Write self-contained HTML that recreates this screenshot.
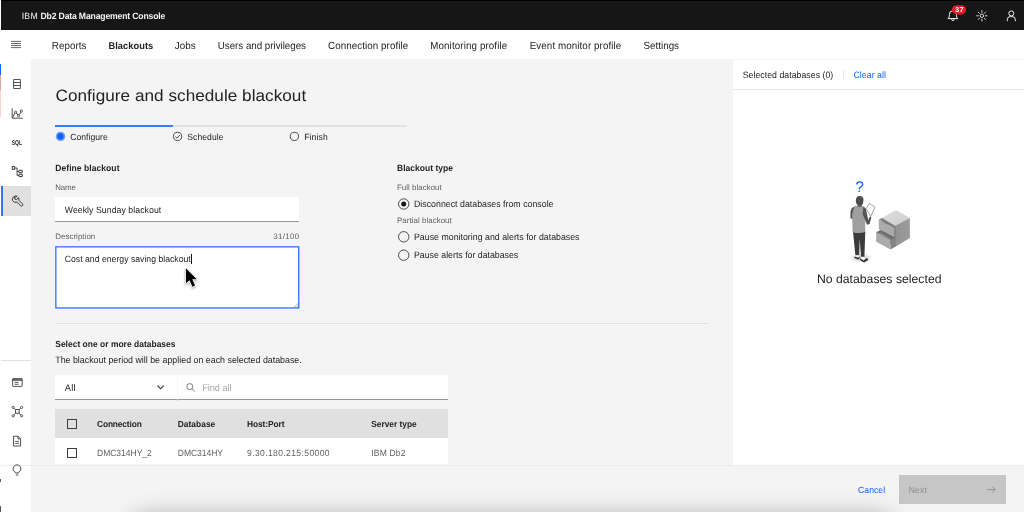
<!DOCTYPE html>
<html lang="en"><head><meta charset="utf-8"><title>IBM Db2 Data Management Console</title>
<style>
html,body{margin:0;padding:0}
body{width:1024px;height:512px;overflow:hidden;background:#f4f4f4;position:relative;font-family:"Liberation Sans",sans-serif}
.a{position:absolute;box-sizing:border-box}
.t{position:absolute;white-space:nowrap;text-rendering:geometricPrecision;line-height:16px;height:16px;margin:0;padding:0;display:block}
#txt{position:absolute;left:0;top:0;width:1024px;height:512px;will-change:transform}
</style></head><body>
<!-- header -->
<div class="a" style="left:1px;top:0;width:1023px;height:30px;background:#161616"></div>
<div class="a" style="left:1px;top:0;width:1023px;height:1px;background:#000"></div>

<!-- top nav -->
<div class="a" style="left:31px;top:30px;width:993px;height:29px;background:#fff"></div>

<!-- sidebar -->
<div class="a" style="left:0;top:30px;width:31px;height:482px;background:#fff"></div>
<div class="a" style="left:1px;top:186px;width:29.5px;height:29.5px;background:#e0e0e0"></div>
<div class="a" style="left:1px;top:186px;width:1.700px;height:29.500px;background:#2f74ff"></div>
<div class="a" style="left:1px;top:360px;width:30px;height:1px;background:#e0e0e0"></div>
<div class="a" style="left:1px;top:464.500px;width:30px;height:1px;background:#efefef"></div>

<!-- left edge strip -->
<div class="a" style="left:0;top:0;width:1px;height:30px;background:#fff"></div>
<div class="a" style="left:0;top:64px;width:1.300px;height:11px;background:#0f62fe"></div>
<div class="a" style="left:0;top:75px;width:1.300px;height:15px;background:#d9a8a2"></div>
<div class="a" style="left:0;top:90px;width:1.300px;height:27px;background:#f6d5d3"></div>

<div class="a" style="left:0;top:479px;width:1px;height:3px;background:#55557a"></div>
<div class="a" style="left:0;top:506px;width:1px;height:6px;background:#555"></div>

<!-- sidebar icons -->
<svg class="a" style="left:0;top:30px" width="31" height="482" viewBox="0 30 31 482" fill="none" stroke="#333" stroke-width="0.85">
  <!-- hamburger -->
  <g stroke="#525252" stroke-width="0.9"><path d="M11 41.4h10M11 43.5h10M11 45.5h10M11 47.6h10"/></g>
  <!-- table/db -->
  <rect x="13.600" y="79.500" width="6.800" height="9" rx="0.200"/><path d="M13.600 82.500h6.800M13.600 85.500h6.800"/>
  <!-- chart -->
  <path d="M12.2 108.2v10h10.6" />
  <path d="M12.6 117.6l2.2-4.4M16.4 112.8l1.6 2.6M19.4 114.6l1.6-2.6" stroke-width="0.9"/>
  <circle cx="15.6" cy="112.2" r="1.1" stroke-width="0.8"/><circle cx="18.6" cy="115.6" r="1.1" stroke-width="0.8"/><circle cx="21.4" cy="111" r="1.1" stroke-width="0.8"/>
  <!-- tree -->
  <rect x="12.200" y="166.600" width="2.500" height="2.700" stroke-width="0.900"/>
  <path d="M14.700 168h2.400v7.400h1.800M17.100 171.500h1.800" stroke-width="0.900"/>
  <rect x="18.900" y="170.300" width="3.400" height="2.400" rx="0.300" stroke-width="1"/>
  <rect x="18.900" y="174.200" width="3.400" height="2.400" rx="0.300" stroke-width="1"/>
  <!-- wrench -->
  <path d="M17.2 196.3a3.4 3.4 0 0 0-4.6 4.2 3.4 3.4 0 0 0 4.3 1.6l3.6 3.6a1.3 1.3 0 0 0 1.9-1.9l-3.6-3.6a3.4 3.4 0 0 0-.3-2.6l-2 2-1.6-.4-.4-1.600z" stroke-width="1" stroke-linejoin="round"/>
  <!-- window -->
  <rect x="12.6" y="378.6" width="9.6" height="7.8" rx="0.5"/><path d="M12.6 380h9.600" stroke-width="1.4"/><path d="M14.6 382.400h4M14.600 384.300h4" stroke-width="0.8"/>
  <!-- network -->
  <rect x="15.6" y="409.600" width="3.6" height="3.600" stroke-width="0.9"/>
  <circle cx="13.2" cy="407.400" r="1.100" stroke-width="0.8"/><circle cx="21.600" cy="407.400" r="1.100" stroke-width="0.8"/><circle cx="13.200" cy="415.800" r="1.100" stroke-width="0.8"/><circle cx="21.600" cy="415.800" r="1.100" stroke-width="0.8"/>
  <path d="M14 408.200l1.600 1.400M20.800 408.200l-1.600 1.400M14 415l1.600-1.800M20.800 415l-1.600-1.800" stroke-width="0.8"/>
  <!-- document -->
  <path d="M13.600 436.200h4.400l2.600 2.600v7.200h-7zM18 436.200v2.600h2.600" stroke-linejoin="round"/><path d="M15.200 441.400h3.800M15.200 443.400h3.800" stroke-width="0.8"/>
  <!-- bulb -->
  <path d="M15.600 472.400a3.900 3.900 0 1 1 2.800 0v.6h-2.800z" stroke-linejoin="round"/><path d="M15.800 475h2.600" stroke-width="0.9"/>
</svg>
<svg class="a" style="left:10px;top:136px;will-change:transform" width="14" height="14" viewBox="0 0 14 14"><text x="1.700" y="8.900" font-family="Liberation Sans, sans-serif" font-size="7" font-weight="700" fill="#2a2a2a" textLength="10.400" lengthAdjust="spacingAndGlyphs" text-rendering="geometricPrecision">SQL</text></svg>

<!-- header icons -->
<svg class="a" style="left:940px;top:0" width="84" height="30" viewBox="940 0 84 30" fill="none" stroke="#f4f4f4" stroke-width="1">
  <!-- bell -->
  <path d="M948 18.600c1.100-1 1.400-2 1.400-4.300a3.500 3.500 0 0 1 7 0c0 2.300.3 3.300 1.400 4.300z" stroke-linejoin="round"/><path d="M951.600 19.200a1.300 1.300 0 0 0 2.600 0"/>
  <!-- badge -->
  <rect x="952" y="5.200" width="14.200" height="9.200" rx="4.600" fill="#da1e28" stroke="none"/>
  <!-- sun -->
  <circle cx="981.900" cy="15.800" r="1.700" stroke-width="0.9"/>
  <path d="M981.900 10.300v2.400M981.900 18.900v2.400M976.400 15.800h2.400M985 15.800h2.400M978 11.900l1.700 1.700M984.100 18l1.700 1.700M978 19.700l1.700-1.700M984.100 13.600l1.700-1.700" stroke-width="0.9"/>
  <!-- user -->
  <circle cx="1011.300" cy="13.400" r="2.500"/><path d="M1007.300 21.200v-1.600a3 3 0 0 1 3-3h2a3 3 0 0 1 3 3v1.600"/>
</svg>

<!-- progress -->
<div class="a" style="left:55px;top:125.300px;width:351.600px;height:1.600px;background:#e2e2e2"></div>
<div class="a" style="left:55px;top:125px;width:118px;height:2px;background:#3a7bff"></div>
<svg class="a" style="left:54px;top:130px" width="250" height="14" viewBox="54 130 250 14" fill="none">
  <circle cx="60.500" cy="136.400" r="4.700" fill="#6a9cff" />
  <circle cx="60.500" cy="136.400" r="3.100" fill="#0f62fe"/>
  <circle cx="177.600" cy="136.400" r="4.100" stroke="#393939" stroke-width="0.9"/>
  <path d="M175.300 136.600l1.600 1.500 3-3" stroke="#393939" stroke-width="0.9"/>
  <circle cx="294.400" cy="136.400" r="4.100" stroke="#393939" stroke-width="0.9"/>
</svg>

<!-- name input -->
<div class="a" style="left:55px;top:197px;width:244px;height:24.500px;background:#fff;border-bottom:1px solid #969696"></div>
<!-- textarea -->
<svg class="a" style="left:54px;top:245px" width="247" height="65" viewBox="54 245 247 65"><rect x="55.850" y="246.850" width="242.900" height="61.100" fill="#fff" stroke="#2d72ff" stroke-width="1.300"/></svg>
<svg class="a" style="left:292.600px;top:301.800px" width="6" height="6" viewBox="0 0 6 6" stroke="#777" stroke-width="0.650"><path d="M1 5.500L5.500 1M3.500 5.500L5.500 3.500"/></svg>
<div class="a" style="left:191px;top:253.500px;width:1px;height:10.500px;background:#161616"></div>

<!-- radios -->
<svg class="a" style="left:396px;top:196px" width="16" height="68" viewBox="396 196 16 68" fill="none" stroke="#262626" stroke-width="0.800">
  <circle cx="403.700" cy="204" r="5.200"/><circle cx="403.700" cy="204" r="2.500" fill="#161616" stroke="none"/>
  <circle cx="403.700" cy="236.800" r="5.200"/>
  <circle cx="403.700" cy="255.200" r="5.200"/>
</svg>

<!-- divider -->
<div class="a" style="left:55px;top:323px;width:653px;height:1px;background:#e0e0e0"></div>

<!-- filter -->
<div class="a" style="left:55px;top:375px;width:392.500px;height:24.500px;background:#fff;border-bottom:1px solid #969696"></div>
<div class="a" style="left:177px;top:375px;width:1px;height:24px;background:#f6f6f6"></div>
<div class="a" style="left:177px;top:399px;width:1px;height:1.500px;background:#c9c9c9"></div>
<svg class="a" style="left:155px;top:380px" width="45" height="16" viewBox="155 380 45 16" fill="none" stroke="#393939" stroke-width="1">
  <path d="M157.500 385.700l3.100 3.100 3.100-3.100" stroke="#2a2a2a" stroke-width="1.100"/>
  <circle cx="189.800" cy="386.600" r="3" stroke="#666" stroke-width="0.850"/><path d="M192 388.800l2.800 2.800" stroke="#666" stroke-width="0.850"/>
</svg>

<!-- table -->
<div class="a" style="left:55px;top:409.200px;width:392.500px;height:29.300px;background:#e0e0e0"></div>
<div class="a" style="left:55px;top:438px;width:392.500px;height:26px;background:#fff"></div>
<div class="a" style="left:67px;top:419px;width:10px;height:10px;border:1px solid #3d3d3d"></div>
<div class="a" style="left:67px;top:448px;width:10px;height:10px;border:1px solid #3d3d3d"></div>

<!-- right panel -->
<div class="a" style="left:733px;top:59px;width:291px;height:405.500px;background:#fff"></div>
<div class="a" style="left:733px;top:89px;width:291px;height:1px;background:#e8e8e8"></div>
<div class="a" style="left:733px;top:59px;width:291px;height:1px;background:#f3f3f3"></div>
<div class="a" style="left:843px;top:70px;width:1px;height:9px;background:#e6e6e6"></div>

<!-- footer -->
<div class="a" style="left:31px;top:464.500px;width:993px;height:1px;background:#ebebeb"></div>
<div class="a" style="left:899px;top:475.300px;width:107.400px;height:28.700px;background:#c6c6c6"></div>
<svg class="a" style="left:984px;top:484px" width="14" height="12" viewBox="984 484 14 12" fill="none" stroke="#8d8d8d" stroke-width="0.900"><path d="M986.800 489.600h8.400M992 486.400l3.200 3.200-3.200 3.200"/></svg>

<!-- bottom shadow -->
<div class="a" style="left:136px;top:517px;width:752px;height:30px;box-shadow:0 0 24px 0 rgba(0,0,0,0.340)"></div>

<!-- mouse cursor -->
<svg class="a" style="left:182px;top:265px;overflow:visible" width="20" height="26" viewBox="182 265 20 26">
  <path d="M185.900 268.300v14.900l3.600-3 2.900 6.500 2.700-1.200-2.800-6.200h4.500z" fill="#000" stroke="#fff" stroke-width="1.800" stroke-linejoin="round" paint-order="stroke" style="filter:drop-shadow(0.500px 1px 1px rgba(0,0,0,0.350))"/>
</svg>

<!-- empty state illustration -->
<svg class="a" style="left:840px;top:174px;will-change:transform" width="80" height="94" viewBox="840 174 80 94">
  <defs>
    <radialGradient id="gsh" cx="50%" cy="50%" r="50%"><stop offset="0" stop-color="#000" stop-opacity="0.300"/><stop offset="0.550" stop-color="#000" stop-opacity="0.120"/><stop offset="1" stop-color="#000" stop-opacity="0"/></radialGradient>
    <linearGradient id="gtop" x1="0" y1="0" x2="1" y2="1"><stop offset="0" stop-color="#dedede"/><stop offset="1" stop-color="#cdcdcd"/></linearGradient>
    <linearGradient id="gright" x1="0" y1="0" x2="1" y2="0"><stop offset="0" stop-color="#929292"/><stop offset="1" stop-color="#9c9c9c"/></linearGradient>
  </defs>
  <!-- ground shadow -->
  <ellipse cx="861" cy="258" rx="11.500" ry="5" fill="url(#gsh)"/>
  <!-- legs -->
  <path d="M853 231.600l2.400 23.800h3.800l.5-16.600 1.300 18.200h3.400l.9-25.400z" fill="#3b3b3b"/>
  <!-- shoes -->
  <path d="M855.200 255.200h4l.2 1.400-1.200 1.800-3.400-1.200z" fill="#f2f2f2"/>
  <path d="M854.600 256.600l3.600 1.200 1.400-1.200.2 1.400-1.600 1.400-3.800-1.400z" fill="#2b2b2b"/>
  <path d="M861.200 256.800h3.400l.4 1.600-2 1.800-2.200-1.400z" fill="#f2f2f2"/>
  <path d="M860.600 258.600l3.200 2.200 4-1.800.4 1-4.200 2.400-4-2.400z" fill="#2b2b2b"/>
  <path d="M863.800 260.600l3.200-2.600 1.200 1.200-4 2.200z" fill="#2b2b2b"/>
  <!-- back arm -->
  <path d="M854.800 206.400c-2.800.6-4.200 2.600-4.300 6l-.1 5.800 3 1 .8-4z" fill="#545454"/>
  <!-- torso -->
  <path d="M854.600 206.200c2.800-.9 6.600-.9 9 .2l1.800 4.400-.2 21.200c-3.800 1.500-9 1.500-12.600-.1l-.5-17.900z" fill="#9f9f9f"/>
  <!-- front arm -->
  <path d="M863.400 206.400l2.400 2 2.500 11.600 1.600-3.600 1.500.9-1.800 6.800-2.600.6-4.400-10.700z" fill="#545454"/>
  <!-- head -->
  <path d="M857.600 203.600h4.200v3.400h-4.200z" fill="#6a6a6a"/>
  <path d="M859.400 196c2.700 0 4.200 1.500 4.100 4l-.5 3.300c-.4 1.600-1.400 2.500-3.100 2.500-2.400 0-4.100-1.800-4.100-5 0-2.900 1.400-4.800 3.600-4.800z" fill="#4c4c4c"/>
  <!-- paper -->
  <path d="M866 208.400l3.700-5 5.200 3.900-4.300 9.300z" fill="#fff" stroke="#777" stroke-width="0.700" stroke-linejoin="round"/>
  <!-- cabinet -->
  <path d="M881.800 218.100l14.100-8.200 14 8.200-14.500 7.900z" fill="url(#gtop)"/>
  <path d="M909.900 218.100v20l-15 8.800v-20.900z" fill="url(#gright)"/>
  <path d="M881.800 218.100l13.600 7.900v21l-13.600-7.400z" fill="#757575"/>
  <!-- upper drawer -->
  <path d="M878.800 219.600l15.200 7.900v9.700l-15.200-8z" fill="#ababab"/>
  <path d="M894 227.500l1.400-.7v9.700l-1.400.7z" fill="#868686"/>
  <path d="M878.800 219.600l3-1.500 13.600 7.900-1.400 1.500z" fill="#8c8c8c"/>
  <path d="M882 219.300c1 3 4 5 7.600 5.400l4.400 2.800v-1.300l-11.200-6.800z" fill="#787878"/>
  <!-- lower drawer -->
  <path d="M876.100 232.300l14.400 7.500v9.800l-14.400-7.800z" fill="#ababab"/>
  <path d="M890.500 239.800l4.400-2.400v9.500l-4.400 2.700z" fill="#848484"/>
  <path d="M876.100 232.300l4.400-2.300 14.400 7.400-4.400 2.400z" fill="#6f6f6f"/>
  <path d="M879.600 232.400c1.200 2.600 3.800 4.400 7 4.800l3.900 2.600v-1.400l-10.300-6z" fill="#8d8d8d"/>
  <text x="855.300" y="192.400" font-family="Liberation Sans, sans-serif" font-size="15.500" font-weight="400" fill="#0f62fe" text-rendering="geometricPrecision">?</text>
</svg>

<div id="txt">
<span class="t" id="h1" style="left:21.75px;top:8px;transform-origin:50% 11.02px;transform:scaleY(1.05);font-size:8.72px;font-weight:400;color:#f4f4f4;letter-spacing:0.194px">IBM</span>
<span class="t" id="h2" style="left:40.5px;top:8px;transform-origin:50% 11.00px;transform:scaleY(1.05);font-size:8.65px;font-weight:700;color:#f4f4f4;letter-spacing:-0.157px">Db2 Data Management Console</span>
<a class="t" id="n1" style="left:51.75px;top:39px;transform-origin:50% 11.39px;transform:scaleY(1.05);font-size:9.79px;font-weight:400;color:#232323;letter-spacing:0.077px">Reports</a>
<a class="t" id="n2" style="left:108.5px;top:38px;transform-origin:50% 11.21px;transform:scaleY(1.05);font-size:9.27px;font-weight:700;color:#232323;letter-spacing:0.053px">Blackouts</a>
<a class="t" id="n3" style="left:174.75px;top:39px;transform-origin:50% 11.39px;transform:scaleY(1.05);font-size:9.79px;font-weight:400;color:#232323;letter-spacing:0.094px">Jobs</a>
<a class="t" id="n4" style="left:217.75px;top:39px;transform-origin:50% 11.39px;transform:scaleY(1.05);font-size:9.79px;font-weight:400;color:#232323;letter-spacing:-0.019px">Users and privileges</a>
<a class="t" id="n5" style="left:328px;top:39px;transform-origin:50% 11.39px;transform:scaleY(1.05);font-size:9.79px;font-weight:400;color:#232323;letter-spacing:0.080px">Connection profile</a>
<a class="t" id="n6" style="left:430.25px;top:39px;transform-origin:50% 11.39px;transform:scaleY(1.05);font-size:9.79px;font-weight:400;color:#232323;letter-spacing:0.113px">Monitoring profile</a>
<a class="t" id="n7" style="left:529.75px;top:39px;transform-origin:50% 11.39px;transform:scaleY(1.05);font-size:9.79px;font-weight:400;color:#232323;letter-spacing:0.088px">Event monitor profile</a>
<a class="t" id="n8" style="left:643.5px;top:39px;transform-origin:50% 11.39px;transform:scaleY(1.05);font-size:9.79px;font-weight:400;color:#232323;letter-spacing:0.021px">Settings</a>
<h1 class="t" id="t1" style="left:55.5px;top:87px;transform-origin:50% 13.95px;transform:scaleY(0.95);font-size:17.18px;font-weight:400;color:#232323;letter-spacing:0.020px">Configure and schedule blackout</h1>
<span class="t" id="s1" style="left:70.25px;top:129px;transform-origin:50% 10.97px;transform:scaleY(1.05);font-size:8.57px;font-weight:400;color:#232323;letter-spacing:0.042px">Configure</span>
<span class="t" id="s2" style="left:187.25px;top:129px;transform-origin:50% 10.97px;transform:scaleY(1.05);font-size:8.57px;font-weight:400;color:#232323;letter-spacing:0.071px">Schedule</span>
<span class="t" id="s3" style="left:304.25px;top:129px;transform-origin:50% 10.97px;transform:scaleY(1.05);font-size:8.57px;font-weight:400;color:#232323;letter-spacing:0.119px">Finish</span>
<h2 class="t" id="l1" style="left:55.25px;top:160px;transform-origin:50% 10.95px;transform:scaleY(1.05);font-size:8.51px;font-weight:700;color:#232323;letter-spacing:0.066px">Define blackout</h2>
<h2 class="t" id="l2" style="left:397px;top:160px;transform-origin:50% 10.95px;transform:scaleY(1.05);font-size:8.51px;font-weight:700;color:#232323;letter-spacing:0.020px">Blackout type</h2>
<label class="t" id="m1" style="left:55.25px;top:180px;font-size:7.88px;font-weight:400;color:#5e5e5e;letter-spacing:-0.147px">Name</label>
<label class="t" id="m2" style="left:55.25px;top:229px;font-size:7.88px;font-weight:400;color:#5e5e5e;letter-spacing:0.058px">Description</label>
<label class="t" id="m3" style="left:273.25px;top:229px;font-size:7.88px;font-weight:400;color:#5e5e5e;letter-spacing:0.347px">31/100</label>
<label class="t" id="m4" style="left:397px;top:180px;font-size:7.88px;font-weight:400;color:#5e5e5e;letter-spacing:0.043px">Full blackout</label>
<label class="t" id="m5" style="left:397px;top:213px;font-size:7.88px;font-weight:400;color:#5e5e5e;letter-spacing:0.058px">Partial blackout</label>
<div class="t" id="i1" style="left:64.75px;top:202px;transform-origin:50% 11.02px;transform:scaleY(1.05);font-size:8.72px;font-weight:400;color:#232323;letter-spacing:0.055px">Weekly Sunday blackout</div>
<div class="t" id="i2" style="left:64.75px;top:251px;transform-origin:50% 11.02px;transform:scaleY(1.05);font-size:8.72px;font-weight:400;color:#232323;letter-spacing:-0.016px">Cost and energy saving blackout</div>
<label class="t" id="r1" style="left:414px;top:196px;transform-origin:50% 11.04px;transform:scaleY(1.05);font-size:8.77px;font-weight:400;color:#232323;letter-spacing:0.019px">Disconnect databases from console</label>
<label class="t" id="r2" style="left:414px;top:229px;transform-origin:50% 11.04px;transform:scaleY(1.05);font-size:8.77px;font-weight:400;color:#232323;letter-spacing:0.020px">Pause monitoring and alerts for databases</label>
<label class="t" id="r3" style="left:414px;top:247px;transform-origin:50% 11.04px;transform:scaleY(1.05);font-size:8.77px;font-weight:400;color:#232323;letter-spacing:-0.001px">Pause alerts for databases</label>
<h2 class="t" id="d1" style="left:55.25px;top:336px;transform-origin:50% 10.93px;transform:scaleY(1.05);font-size:8.45px;font-weight:700;color:#232323;letter-spacing:0.024px">Select one or more databases</h2>
<p class="t" id="d2" style="left:55.25px;top:352px;transform-origin:50% 11.06px;transform:scaleY(1.05);font-size:8.83px;font-weight:400;color:#232323;letter-spacing:0.010px">The blackout period will be applied on each selected database.</p>
<div class="t" id="f1" style="left:64.75px;top:380px;transform-origin:50% 11.18px;transform:scaleY(1.05);font-size:9.18px;font-weight:400;color:#232323;letter-spacing:0.319px">All</div>
<div class="t" id="f2" style="left:202.25px;top:380px;transform-origin:50% 11.18px;transform:scaleY(1.05);font-size:9.18px;font-weight:400;color:#a8a8a8;letter-spacing:-0.044px">Find all</div>
<span class="t" id="th1" style="left:97px;top:416px;transform-origin:50% 10.90px;transform:scaleY(1.05);font-size:8.37px;font-weight:700;color:#232323;letter-spacing:-0.130px">Connection</span>
<span class="t" id="th2" style="left:177.75px;top:416px;transform-origin:50% 10.90px;transform:scaleY(1.05);font-size:8.37px;font-weight:700;color:#232323;letter-spacing:0.042px">Database</span>
<span class="t" id="th3" style="left:247px;top:416px;transform-origin:50% 10.90px;transform:scaleY(1.05);font-size:8.37px;font-weight:700;color:#232323;letter-spacing:-0.070px">Host:Port</span>
<span class="t" id="th4" style="left:371.25px;top:416px;transform-origin:50% 10.90px;transform:scaleY(1.05);font-size:8.37px;font-weight:700;color:#232323;letter-spacing:-0.004px">Server type</span>
<span class="t" id="td1" style="left:97px;top:445px;transform-origin:50% 10.96px;transform:scaleY(1.05);font-size:8.54px;font-weight:400;color:#5e5e5e;letter-spacing:-0.028px">DMC314HY_2</span>
<span class="t" id="td2" style="left:177.75px;top:445px;transform-origin:50% 10.96px;transform:scaleY(1.05);font-size:8.54px;font-weight:400;color:#5e5e5e;letter-spacing:-0.035px">DMC314HY</span>
<span class="t" id="td3" style="left:247px;top:445px;transform-origin:50% 10.96px;transform:scaleY(1.05);font-size:8.54px;font-weight:400;color:#5e5e5e;letter-spacing:0.390px">9.30.180.215:50000</span>
<span class="t" id="td4" style="left:371.25px;top:445px;transform-origin:50% 10.96px;transform:scaleY(1.05);font-size:8.54px;font-weight:400;color:#5e5e5e;letter-spacing:0.161px">IBM Db2</span>
<span class="t" id="p1" style="left:742.75px;top:67px;transform-origin:50% 11.03px;transform:scaleY(1.05);font-size:8.74px;font-weight:400;color:#232323;letter-spacing:0.031px">Selected databases (0)</span>
<a class="t" id="p2" style="left:853.5px;top:67px;transform-origin:50% 11.03px;transform:scaleY(1.05);font-size:8.74px;font-weight:400;color:#0f62fe;letter-spacing:0.053px">Clear all</a>
<p class="t" id="e1" style="left:816.95px;top:271px;font-size:12.2px;font-weight:400;color:#232323;letter-spacing:0.027px">No databases selected</p>
<a class="t" id="b1" style="left:858px;top:482px;transform-origin:50% 10.98px;transform:scaleY(1.05);font-size:8.61px;font-weight:400;color:#0f62fe;letter-spacing:0.070px">Cancel</a>
<span class="t" id="b2" style="left:908.65px;top:482px;transform-origin:50% 10.98px;transform:scaleY(1.05);font-size:8.61px;font-weight:400;color:#8d8d8d;letter-spacing:0.179px">Next</span>
<span class="t" id="bd" style="left:955.15px;top:2px;font-size:7.14px;font-weight:700;color:#ffffff;letter-spacing:0.508px">37</span>
</div>
</body></html>
